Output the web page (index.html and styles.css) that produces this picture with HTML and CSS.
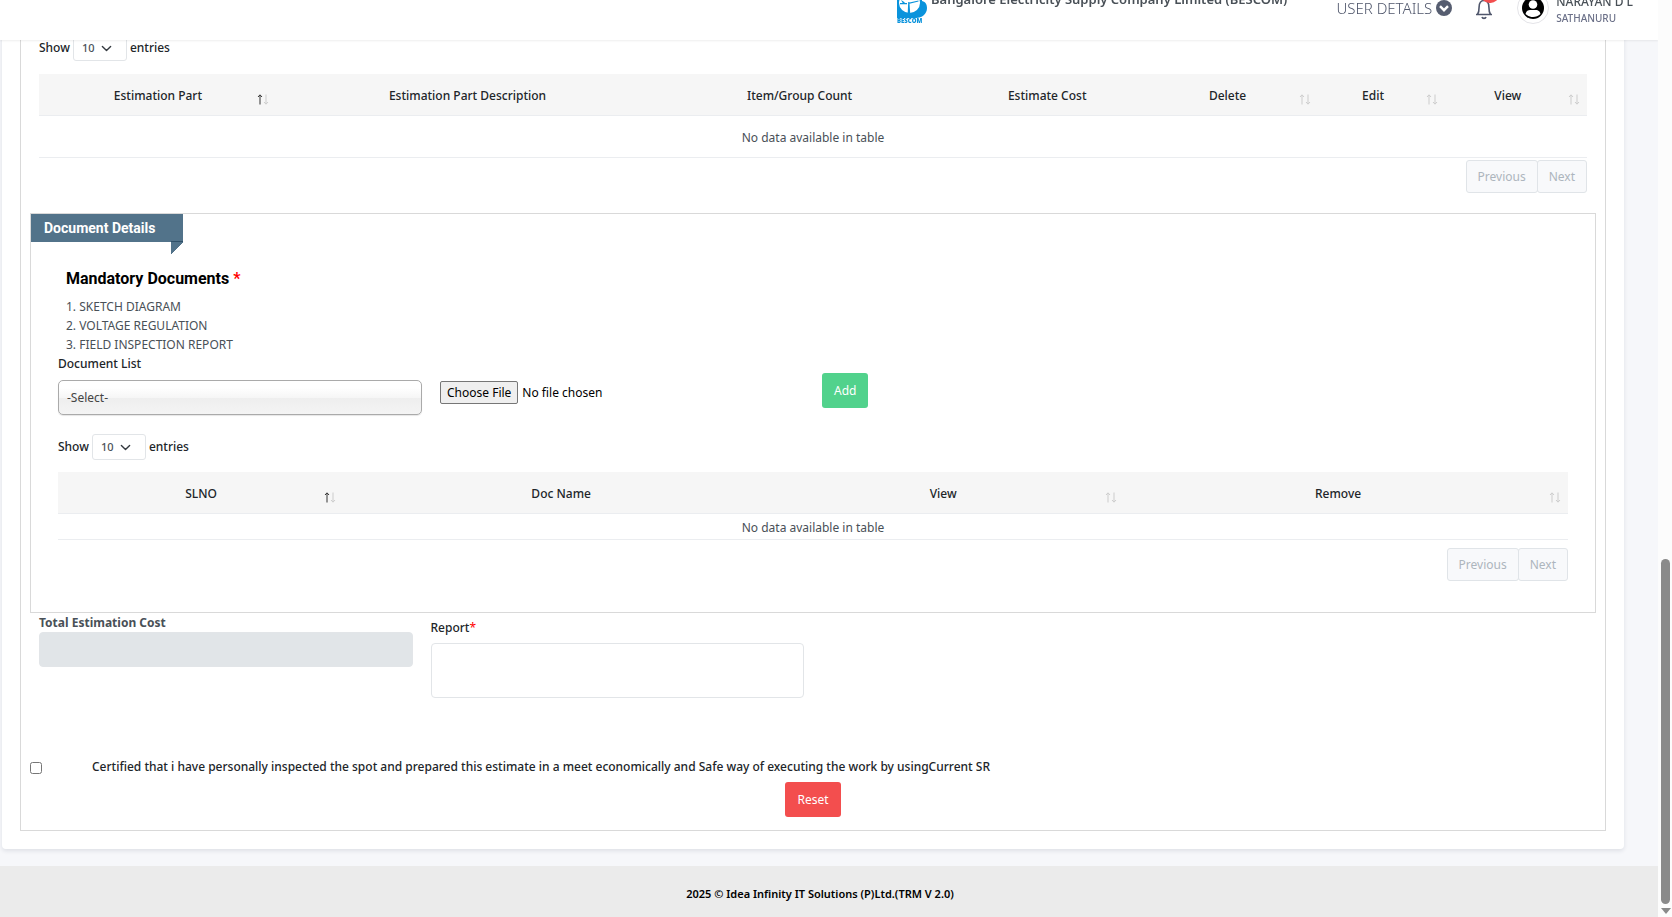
FILE: index.html
```html
<!DOCTYPE html>
<html lang="en">
<head>
<meta charset="utf-8">
<title>Estimation - BESCOM</title>
<link rel="stylesheet" href="styles.css">
</head>
<body>
<svg class="sprite" aria-hidden="true">
  <symbol id="sort" viewBox="0 0 12 11">
    <path class="up" d="M3 10.500V1M1 3L3 .8 5 3" fill="none"/>
    <path class="down" d="M9 .5V10M7 8l2 2.200L11 8" fill="none"/>
  </symbol>
</svg>
<header class="topbar">
  <div class="brand">
    <svg class="logo" viewBox="0 0 32 36" role="img" aria-label="BESCOM">
      <path d="M1 0h25v1c4 1 5 4 5 7 0 6-5 10-11 10H1z" fill="#0a93dc"/>
      <ellipse cx="13.500" cy="3" rx="10.500" ry="10" fill="#fff"/>
      <path d="M4 3h7v1.200H4zM12.200 2h1.200l.8 11h-2.500zM13.500 2.500l9-2v1l-9 2.200z" fill="#0a93dc"/>
      <path d="M5 0l4 2.500-2 1z" fill="#0a93dc"/>
      <text x="1" y="23" class="logo-text">BESCOM</text>
    </svg>
    <span class="company">Bangalore Electricity Supply Company Limited (BESCOM)</span>
  </div>
  <div class="user-tools">
    <button class="user-details" type="button">USER DETAILS
      <svg class="chev" viewBox="0 0 16 16"><circle cx="8" cy="8" r="8" fill="#565d70"/><path d="M4 6.200l4 4 4-4" fill="none" stroke="#fff" stroke-width="2.400"/></svg>
    </button>
    <button class="bell" type="button" aria-label="Notifications">
      <svg viewBox="0 0 20 24"><path d="M2 18.500h16M3.500 18.500c1.200-1.800 1.600-3.400 1.600-7.500C5.100 7 7 4.500 10 4.500s4.900 2.500 4.900 6.500c0 4.100.4 5.700 1.600 7.500M8 21c.5 1.800 3.500 1.800 4 0" fill="none" stroke="#4f566b" stroke-width="1.600"/></svg>
      <span class="badge"></span>
    </button>
    <a class="profile" href="#">
      <svg class="avatar" viewBox="0 0 32 32"><circle cx="16" cy="16" r="15.500" fill="#fff" stroke="#e4e4e8"/><circle cx="16" cy="16" r="11" fill="#000"/><circle cx="16" cy="12.500" r="4.300" fill="#fff"/><path d="M8.500 22c1-4.500 4-4 7.500-4s6.500-.5 7.500 4c-4 4-11 4-15 0z" fill="#fff"/></svg>
      <span class="who"><span class="name">NARAYAN D L</span><span class="place">SATHANURU</span></span>
    </a>
  </div>
</header>

<main class="page">
  <section class="card">
    <div class="panel">
      <div class="inset">
        <div class="length"><label for="len1">Show</label><select id="len1"><option>10</option></select><span>entries</span></div>
        <table class="grid parts">
          <colgroup><col class="p1"><col class="p2"><col class="p3"><col class="p4"><col class="p5"><col class="p6"><col class="p7"></colgroup>
          <thead><tr>
            <th class="asc">Estimation Part<svg class="sort"><use href="#sort"/></svg></th>
            <th>Estimation Part Description</th>
            <th>Item/Group Count</th>
            <th>Estimate Cost</th>
            <th>Delete<svg class="sort"><use href="#sort"/></svg></th>
            <th>Edit<svg class="sort"><use href="#sort"/></svg></th>
            <th>View<svg class="sort"><use href="#sort"/></svg></th>
          </tr></thead>
          <tbody><tr><td colspan="7">No data available in table</td></tr></tbody>
        </table>
        <nav class="pager" aria-label="Estimation pages"><button type="button" disabled>Previous</button><button type="button" disabled>Next</button></nav>
      </div>

      <section class="documents">
        <h2 class="ribbon">Document Details</h2>
        <div class="mandatory">
          <h3>Mandatory Documents <span class="req">*</span></h3>
          <ol><li>SKETCH DIAGRAM</li><li>VOLTAGE REGULATION</li><li>FIELD INSPECTION REPORT</li></ol>
        </div>
        <div class="columns">
          <div class="field">
            <label for="doc">Document List</label>
            <select id="doc" class="chosen"><option>-Select-</option></select>
          </div>
          <input class="file" type="file" aria-label="Document file">
          <div><button class="btn add" type="button">Add</button></div>
        </div>
        <div class="length"><label for="len2">Show</label><select id="len2"><option>10</option></select><span>entries</span></div>
        <table class="grid docs">
          <colgroup><col class="d1"><col class="d2"><col class="d3"><col class="d4"></colgroup>
          <thead><tr>
            <th class="asc">SLNO<svg class="sort"><use href="#sort"/></svg></th>
            <th>Doc Name</th>
            <th>View<svg class="sort"><use href="#sort"/></svg></th>
            <th>Remove<svg class="sort"><use href="#sort"/></svg></th>
          </tr></thead>
          <tbody><tr><td colspan="4">No data available in table</td></tr></tbody>
        </table>
        <nav class="pager" aria-label="Document pages"><button type="button" disabled>Previous</button><button type="button" disabled>Next</button></nav>
      </section>

      <div class="inset columns totals">
        <div class="field cost"><label for="cost">Total Estimation Cost</label><input id="cost" type="text" disabled></div>
        <div class="field report"><label for="report">Report<span class="req">*</span></label><textarea id="report"></textarea></div>
      </div>

      <div class="certify">
        <input type="checkbox" id="cert">
        <label for="cert">Certified that i have personally inspected the spot and prepared this estimate in a meet economically and Safe way of executing the work by usingCurrent SR</label>
      </div>
      <div class="actions"><button class="btn danger" type="button">Reset</button></div>
    </div>
  </section>
</main>
<footer class="footer">2025 © Idea Infinity IT Solutions (P)Ltd.(TRM V 2.0)</footer>
<div class="scrollbar" aria-hidden="true"><span class="thumb"></span><span class="arrow"></span></div>
</body>
</html>
```
FILE: styles.css
```css
* { box-sizing: border-box; }
body {
  margin: 0;
  padding-right: 14px;
  background: #f6f7fa;
  color: #212529;
  font-family: "Noto Sans", "Open Sans", sans-serif;
  font-size: 12px;
  line-height: 18px;
}
button, select, input, textarea { font: inherit; }
.sprite { position: absolute; width: 0; height: 0; }

/* Top bar */
.topbar {
  position: fixed;
  z-index: 5;
  top: 0;
  left: 0;
  right: 14px;
  height: 40px;
  padding: 0 25px 0 896px;
  display: flex;
  justify-content: space-between;
  background: #fff;
  box-shadow: 0 1px 2px #00000012;
}
.brand { display: flex; align-items: flex-start; gap: 3px; white-space: nowrap; }
.logo { width: 32px; height: 36px; flex: none; }
.logo-text { font: 800 6px "Open Sans", sans-serif; fill: #0a93dc; }
.company { margin-top: -10px; font-size: 13px; font-weight: 600; color: #495057; }
.user-tools { display: flex; align-items: flex-start; white-space: nowrap; }
.topbar button { border: 0; padding: 0; background: none; }
.topbar .user-details { display: flex; align-items: center; gap: 4px; font-size: 15px; font-weight: 300; color: #4f566b; line-height: 16px; }
.chev { width: 16px; height: 16px; }
.topbar .bell { position: relative; width: 20px; height: 24px; margin: -4px 23px 0 22px; }
.bell svg { width: 20px; height: 24px; }
.badge { position: absolute; top: -10px; right: -5px; width: 18px; height: 17px; border-radius: 9px; background: #f34e4e; }
.profile { display: flex; gap: 7px; text-decoration: none; color: #495057; }
.avatar { width: 32px; height: 32px; margin-top: -8px; }
.who { display: flex; flex-direction: column; margin-top: -7px; }
.name { font-size: 12px; font-weight: 500; }
.place { font-size: 10px; line-height: 14px; font-weight: 500; color: #6b7088; }

/* Page frame */
.page { padding: 0 34px 17px 2px; }
.card { padding: 0 18px 18px; background: #fff; border-radius: 0 0 4px 4px; box-shadow: 0 2px 4px #0f223a1a; }
.panel { padding: 35px 9px 13px; border: solid #d9d9d9; border-width: 0 1px 1px; }
.inset { padding: 0 9px; }

/* Length picker */
.length { display: flex; align-items: center; gap: 3px; font-weight: 500; }
.length select {
  width: 54px;
  height: 26px;
  padding: 0 24px 0 8px;
  appearance: none;
  border: 1px solid #e2e5e8;
  border-radius: 3px;
  color: #495057;
  font-size: 11px;
  background: #fff url("data:image/svg+xml,%3Csvg xmlns='http://www.w3.org/2000/svg' viewBox='0 0 16 16'%3E%3Cpath fill='none' stroke='%23343a40' stroke-width='2' stroke-linecap='round' stroke-linejoin='round' d='M2 5l6 6 6-6'/%3E%3C/svg%3E") no-repeat right 14px center / 11px;
}

/* Tables */
.grid { width: 100%; table-layout: fixed; border-collapse: separate; border-spacing: 0; margin-top: 13px; text-align: center; }
.grid th, .grid td { border-bottom: 1px solid #ebedf0; }
.grid th { position: relative; height: 42px; padding: 2px 24px 0 8px; background: #f6f6f6; font-weight: 500; }
.grid td { height: 42px; padding: 2px 0 0; color: #495057; }
.docs { margin-top: 12px; }
.docs td { height: 26px; }
.sort { position: absolute; right: 7px; bottom: 10px; width: 12px; height: 11px; color: #ccc; }
.asc .sort { right: 24px; color: #333; }
.up { stroke: currentColor; }
.down { stroke: #ccc; }
.p1 { width: 16.400%; } .p2 { width: 23.600%; } .p3 { width: 19.300%; } .p4 { width: 12.700%; }
.p5 { width: 10.600%; } .p6 { width: 8.200%; } .p7 { width: 9.200%; }
.d1 { width: 20%; } .d2 { width: 27.700%; } .d3 { width: 22.900%; } .d4 { width: 29.400%; }

/* Pagination */
.pager { display: flex; justify-content: flex-end; margin-top: 2px; }
.pager button { height: 33px; padding: 0 11px; border: 1px solid #e0e4e8; border-radius: 3px; background: #f8f9fb; color: #adb5bd; }
.pager button + button { margin-left: -1px; }

/* Document details */
.documents { margin-top: 20px; padding: 0 27px 31px; border: 1px solid #d9d9d9; }
.ribbon {
  position: relative;
  width: 152px;
  height: 28px;
  margin: 0 0 0 -27px;
  padding-left: 13px;
  background: #52738a;
  color: #fff;
  font: 700 14px/28px Roboto, sans-serif;
}
.ribbon::after {
  content: "";
  position: absolute;
  right: 0;
  top: 27px;
  width: 12px;
  height: 12px;
  border-top: 1px solid #2f5068;
  background: linear-gradient(to bottom right, #52738a 50%, transparent 51%);
}
.mandatory { margin: 27px 0 1px 8px; }
.mandatory h3 { margin: 0 0 8px; font: 700 16px/20px Roboto, sans-serif; color: #000; }
.req { color: #f00; }
.mandatory ol { margin: 0; padding: 0; list-style-position: inside; color: #495057; line-height: 19px; }
.columns { display: grid; grid-template-columns: repeat(4, minmax(0, 1fr)); column-gap: 18px; align-items: start; }
.field { display: flex; flex-direction: column; font-weight: 500; }
.chosen {
  height: 35px;
  margin-top: 7px;
  padding: 0 8px;
  appearance: none;
  border: 1px solid #aaa;
  border-radius: 5px;
  background: linear-gradient(#fff 20%, #f6f6f6 50%, #eee 52%, #f4f4f4);
  box-shadow: 0 1px 1px #0000001a;
  color: #444;
  font-weight: 400;
}
.file { width: 100%; margin-top: 26px; color: #000; line-height: 18px; }
.file::file-selector-button { height: 23px; margin-right: 4px; padding: 1px 6px; border: 1px solid #767676; border-radius: 2px; background: #efefef; color: #000; font: inherit; }
.btn { height: 35px; padding: 0 12px; border: 0; border-radius: 3px; color: #fff; font-weight: 400; }
.add { margin-top: 18px; background: #51d28c; }
.danger { background: #f34e4e; }
.documents .length { margin-top: 19px; }
.documents .pager { margin-top: 8px; }

/* Totals */
.totals { min-height: 145px; }
.cost { color: #495057; font-weight: 700; padding-top: 1px; }
.cost input { height: 35px; border: 1px solid #e2e5e8; border-radius: 4px; background: #e1e5e8; }
.report { padding-top: 6px; }
.report textarea { height: 55px; margin-top: 6px; border: 1px solid #e2e5e8; border-radius: 4px; resize: none; }
.report .req { font-weight: 400; }

/* Certification */
.certify { display: flex; align-items: flex-start; gap: 50px; padding-bottom: 6px; font-weight: 500; }
.certify input { width: 12px; height: 12px; margin: 4px 0 0; }
.actions { text-align: center; font-size: 0; }
.actions .btn { font-size: 12px; }

.footer { height: 52px; padding: 0 18px 0 0; background: #ebebeb; text-align: center; color: #000; font-size: 11px; font-weight: 600; line-height: 55px; }

/* Scroll indicator */
.scrollbar { position: fixed; z-index: 6; top: 0; right: 0; bottom: 0; width: 14px; padding: 0 2px 3px 3px; display: flex; flex-direction: column; align-items: center; justify-content: flex-end; gap: 4px; background: #fcfcfc; }
.thumb { width: 9px; height: 345px; border-radius: 5px; background: #8a8a8a; }
.arrow { border: 5px solid transparent; border-top: 6px solid #8a8a8a; border-bottom: 0; }
```
